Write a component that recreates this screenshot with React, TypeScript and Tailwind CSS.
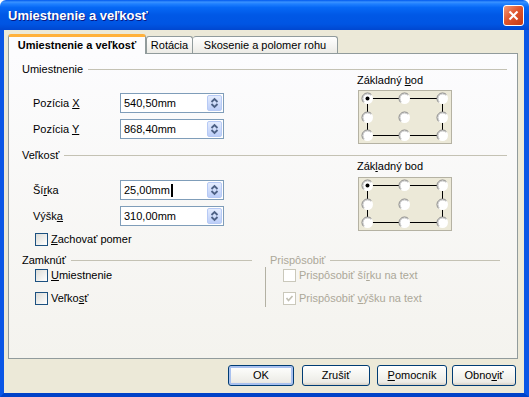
import React from "react";

const F = "font-['Liberation_Sans',Arial,sans-serif]";

function U({ c }: { c: string }) {
  return <span className="underline decoration-1 underline-offset-[1px]">{c}</span>;
}

function Header({ children, disabled }: { children: React.ReactNode; disabled?: boolean }) {
  return (
    <div className="flex items-center h-[13px]">
      <span className={disabled ? "text-[#ACA899]" : "text-black"}>{children}</span>
      <div className="flex-1 h-px bg-[#C4C2B4] ml-[5px]" />
    </div>
  );
}

function Spin() {
  return (
    <div className="w-[15px] h-[16px] rounded-[2px] border border-[#B7CAF5] bg-[linear-gradient(180deg,#E4ECFE,#BCCEF8)] flex items-center justify-center">
      <svg width="13" height="14" viewBox="0 0 13 14">
        <polyline points="3.5,6 6.5,3 9.5,6" fill="none" stroke="#4D6185" strokeWidth="1.8" />
        <polyline points="3.5,8 6.5,11 9.5,8" fill="none" stroke="#4D6185" strokeWidth="1.8" />
      </svg>
    </div>
  );
}

function Field({ label, value, caret }: { label: React.ReactNode; value: string; caret?: boolean }) {
  return (
    <div className="flex items-center h-[20px]">
      <div className="w-[87px]">{label}</div>
      <div className="w-[104px] h-[20px] border border-[#7F9DB9] bg-white flex items-center pl-[3px] pr-[1px]">
        <div className="flex-1 flex items-center">
          <span>{value}</span>
          {caret && <span className="inline-block w-[2px] h-[13px] bg-black ml-[1px]" />}
        </div>
        <Spin />
      </div>
    </div>
  );
}

function Check({ checked, disabled }: { checked?: boolean; disabled?: boolean }) {
  return (
    <div
      className={
        disabled
          ? "w-[13px] h-[13px] border border-[#CAC8BB] bg-white flex items-center justify-center"
          : "w-[13px] h-[13px] border border-[#1C5180] bg-[linear-gradient(135deg,#DCDCD7,#FFFFFF)] flex items-center justify-center"
      }
    >
      {checked && (
        <svg width="11" height="11" viewBox="0 0 11 11">
          <polyline points="2.5,5 4.5,7.5 8.5,3" fill="none" stroke={disabled ? "#C2C0B4" : "#21A121"} strokeWidth="1.7" />
        </svg>
      )}
    </div>
  );
}

function CheckRow({ children, checked, disabled }: { children: React.ReactNode; checked?: boolean; disabled?: boolean }) {
  return (
    <div className="flex items-center h-[13px]">
      <Check checked={checked} disabled={disabled} />
      <span className={`ml-[3px] ${disabled ? "text-[#ACA899]" : "text-black"}`}>{children}</span>
    </div>
  );
}

function RadioGrid() {
  const xs = [8.5, 45.5, 83.5];
  const ys = [7.5, 26.5, 44.5];
  const r = 5.5;
  const k = r * 0.7071;
  const r2 = r - 1;
  const k2 = r2 * 0.7071;
  return (
    <div className="w-[94px] h-[54px] border border-[#B5B2A3] bg-[#ECE9D8] ml-[1px]">
      <svg width="92" height="52" viewBox="0 0 92 52">
        <line x1={xs[0]} y1={ys[0]} x2={xs[2]} y2={ys[0]} stroke="#000" strokeWidth="1" />
        <line x1={xs[0]} y1={ys[2]} x2={xs[2]} y2={ys[2]} stroke="#000" strokeWidth="1" />
        <line x1={xs[0]} y1={ys[0]} x2={xs[0]} y2={ys[2]} stroke="#000" strokeWidth="1" />
        <line x1={xs[2]} y1={ys[0]} x2={xs[2]} y2={ys[2]} stroke="#000" strokeWidth="1" />
        {ys.map((cy) =>
          xs.map((cx) => (
            <g key={`${cx}-${cy}`}>
              <circle cx={cx} cy={cy} r={r} fill="#FFFFFF" />
              <path
                d={`M ${cx - k} ${cy + k} A ${r} ${r} 0 0 1 ${cx + k} ${cy - k}`}
                fill="none"
                stroke="#7A7A7A"
                strokeWidth="1"
              />
              <path
                d={`M ${cx - k2} ${cy + k2} A ${r2} ${r2} 0 0 1 ${cx + k2} ${cy - k2}`}
                fill="none"
                stroke="#C8C8C8"
                strokeWidth="1"
              />
            </g>
          ))
        )}
        <circle cx={xs[0]} cy={ys[0]} r={2} fill="#000" />
      </svg>
    </div>
  );
}

function Btn({ children, className, def }: { children: React.ReactNode; className: string; def?: boolean }) {
  return (
    <div
      className={`h-[21px] rounded-[3px] border border-[#003C74] bg-[linear-gradient(180deg,#FFFFFF_0%,#F5F5F1_45%,#ECEBE6_85%,#D6D0C5_100%)] flex items-center justify-center text-black ${
        def ? "shadow-[inset_0_0_0_2px_#A9C1EF]" : ""
      } ${className}`}
    >
      {children}
    </div>
  );
}

export default function App() {
  return (
    <div className={`w-[529px] h-[397px] flex flex-col text-[11px] leading-[13px] ${F}`}>
      {/* Title bar */}
      <div className="h-[30px] flex items-center pl-[8px] pr-[5px] bg-[linear-gradient(180deg,#0058EE_0%,#3A93FF_7%,#1F80FF_13%,#0668F5_25%,#0058E6_50%,#0055E3_80%,#0047D0_100%)] rounded-t-[6px]">
        <span className="text-white font-bold text-[13px] [text-shadow:1px_1px_#0A1883]">Umiestnenie a veľkosť</span>
        <div className="flex-1" />
        <div className="w-[21px] h-[21px] rounded-[3px] border border-white bg-[linear-gradient(135deg,#F29A7A_0%,#E0562E_45%,#C53A14_100%)] flex items-center justify-center">
          <svg width="13" height="13" viewBox="0 0 13 13">
            <line x1="2.5" y1="2.5" x2="10.5" y2="10.5" stroke="#FFFFFF" strokeWidth="2.2" />
            <line x1="10.5" y1="2.5" x2="2.5" y2="10.5" stroke="#FFFFFF" strokeWidth="2.2" />
          </svg>
        </div>
      </div>

      {/* Body */}
      <div className="flex-1 flex flex-col bg-[#ECE9D8] border-l-[4px] border-r-[5px] border-b-[4px] border-l-[#0A56E6] border-r-[#0A56E6] border-b-[#0042C8] pt-[4px] pl-[4px]">
        {/* Tabs */}
        <div className="flex items-end h-[19px]">
          <div className="relative z-10 w-[138px] h-[20px] -mb-[1px] border-t-[3px] border-t-[#FFB13C] border-x border-x-[#919B9C] rounded-t-[3px] bg-[#FCFCFE] flex items-center justify-center font-bold text-black">
            Umiestnenie a veľkosť
          </div>
          <div className="w-[47px] h-[17px] border-t border-x border-[#919B9C] rounded-t-[3px] bg-[linear-gradient(180deg,#FFFFFF,#ECEBE6)] flex items-center justify-center pt-[1px] text-black">
            Rotácia
          </div>
          <div className="w-[145px] h-[17px] border-t border-r border-[#919B9C] rounded-t-[3px] bg-[linear-gradient(180deg,#FFFFFF,#ECEBE6)] flex items-center justify-center pt-[1px] text-black">
            Skosenie a polomer rohu
          </div>
        </div>

        {/* Page */}
        <div className="w-[510px] h-[306px] border border-[#919B9C] bg-[linear-gradient(180deg,#FCFCFE,#F4F3EE)] pt-[9px] pl-[13px] pr-[10px] flex flex-col text-black">
          <Header>Umiestnenie</Header>
          <div className="flex items-start">
            <div className="w-[335px] pl-[11px] mt-[17px] flex flex-col gap-[6px]">
              <Field label={<span>Pozícia <U c="X" /></span>} value="540,50mm" />
              <Field label={<span>Pozícia <U c="Y" /></span>} value="868,40mm" />
            </div>
            <div className="-mt-[2px] flex flex-col">
              <div className="h-[13px]">Základný <U c="b" />od</div>
              <div className="mt-[3px]">
                <RadioGrid />
              </div>
            </div>
          </div>

          <div className="mt-[5px]">
            <Header>Veľkosť</Header>
          </div>
          <div className="flex items-start">
            <div className="w-[335px] pl-[11px] mt-[18px] flex flex-col">
              <Field label={<span>Ší<U c="r" />ka</span>} value="25,00mm" caret />
              <div className="mt-[6px]">
                <Field label={<span>Výšk<U c="a" /></span>} value="310,00mm" />
              </div>
              <div className="mt-[7px] ml-[2px]">
                <CheckRow><U c="Z" />achovať pomer</CheckRow>
              </div>
            </div>
            <div className="-mt-[2px] flex flex-col">
              <div className="h-[13px]">Zák<U c="l" />adný bod</div>
              <div className="mt-[4px]">
                <RadioGrid />
              </div>
            </div>
          </div>

          <div className="mt-[8px] flex items-start">
            <div className="w-[230px] flex flex-col">
              <Header>Zamknúť</Header>
              <div className="pl-[13px] pt-[2px] flex flex-col gap-[10px]">
                <CheckRow><U c="U" />miestnenie</CheckRow>
                <CheckRow>Veľko<U c="s" />ť</CheckRow>
              </div>
            </div>
            <div className="ml-[13px] w-[235px] flex flex-col">
              <div className="pl-[5px]">
                <Header disabled>Prispôsobiť</Header>
              </div>
              <div className="border-l border-[#B3B1A3] pl-[17px] pt-[2px] pb-[2px] flex flex-col gap-[10px]">
                <CheckRow disabled>Prispôsobiť ší<U c="r" />ku na text</CheckRow>
                <CheckRow disabled checked>Prispôsobiť <U c="v" />ýšku na text</CheckRow>
              </div>
            </div>
          </div>
        </div>

        {/* Buttons */}
        <div className="mt-[6px] h-[21px] flex justify-end pr-[8px]">
          <Btn className="w-[66px]" def>OK</Btn>
          <Btn className="w-[68px] ml-[8px]">Zrušiť</Btn>
          <Btn className="w-[70px] ml-[7px]"><span><U c="P" />omocník</span></Btn>
          <Btn className="w-[64px] ml-[5px]"><span>Obno<U c="v" />iť</span></Btn>
        </div>
      </div>
    </div>
  );
}
